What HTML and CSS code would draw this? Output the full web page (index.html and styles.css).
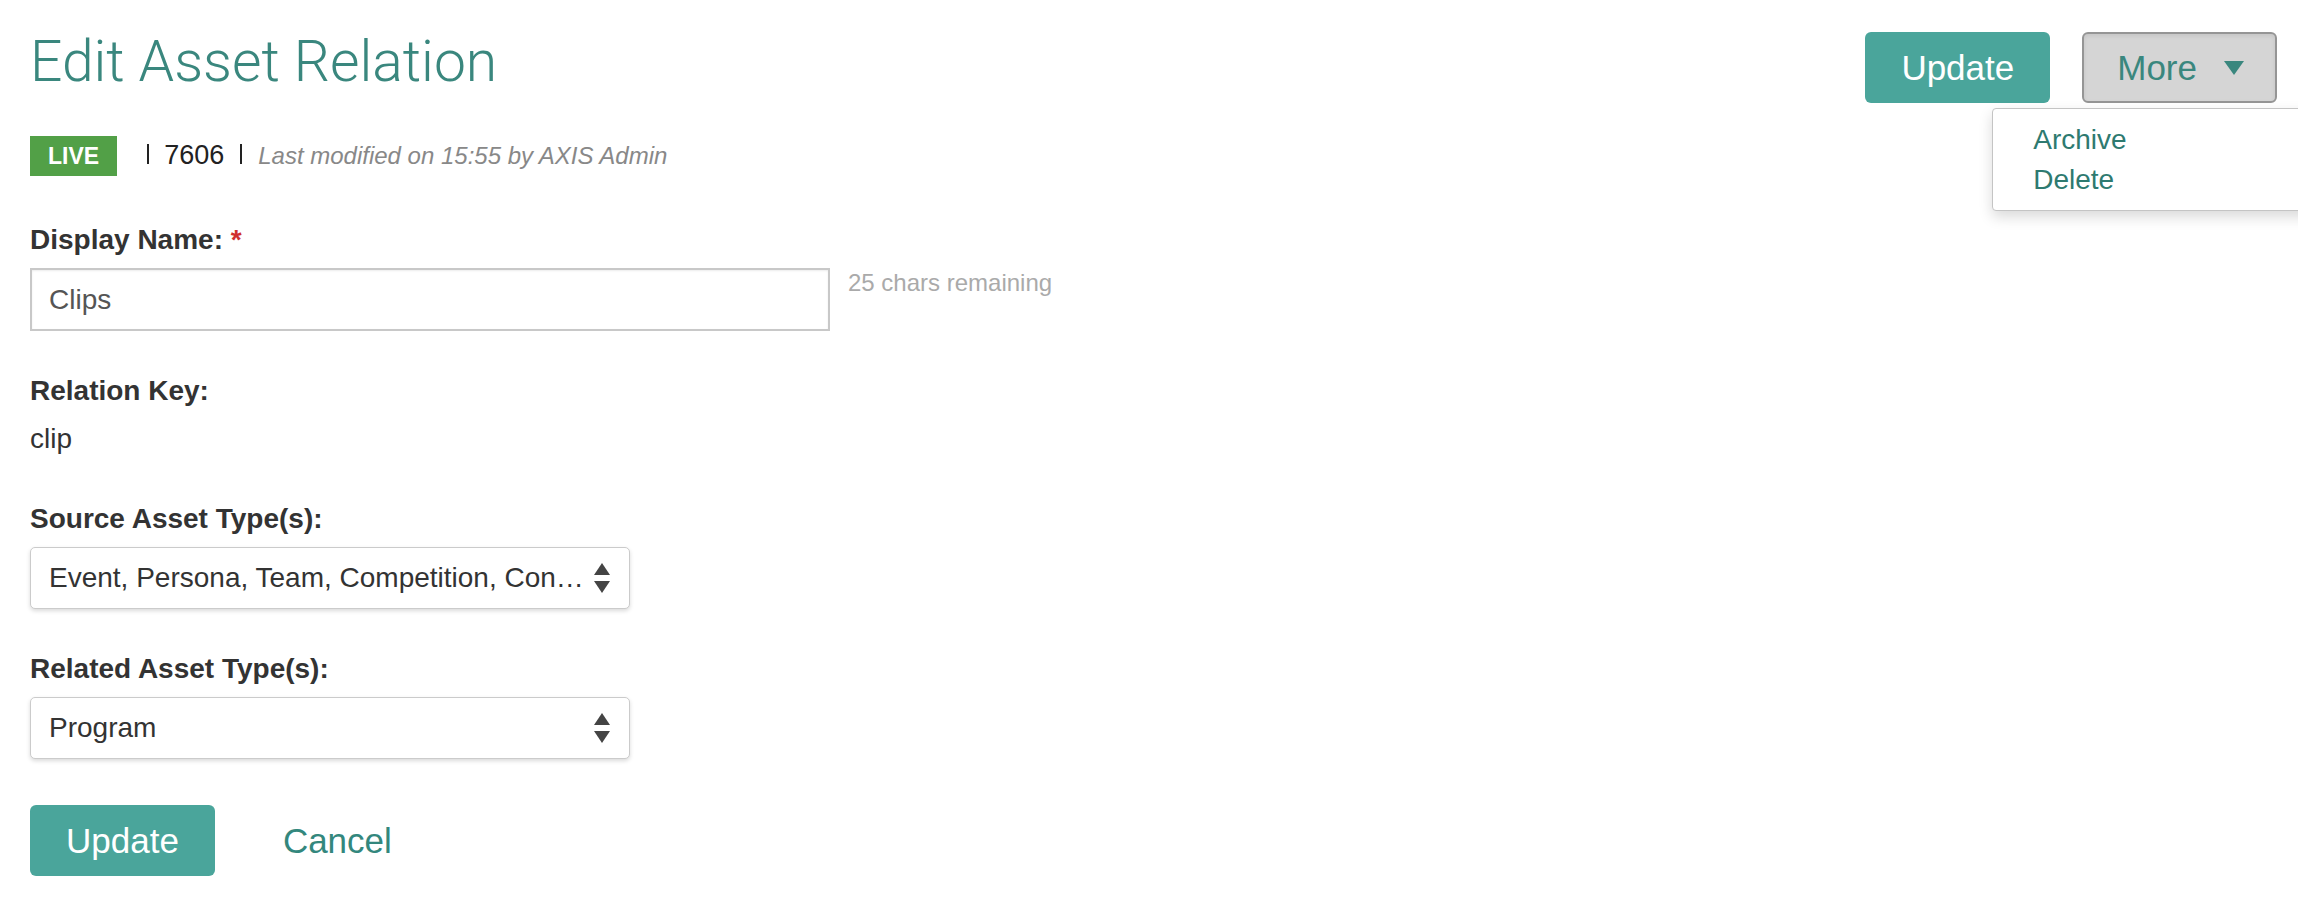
FILE: index.html
```
<!DOCTYPE html>
<html>
<head>
	<title>Edit Asset Relation</title>
	<link rel="stylesheet" href="styles.css">
</head>
<body>
	<div class="page">
		<header class="page-header">
			<div class="heading">
				<h1>Edit Asset Relation</h1>
				<div class="meta">
					<span class="badge">LIVE</span>
					<span class="bar"></span>
					<span class="asset-id">7606</span>
					<span class="bar"></span>
					<span class="modified">Last modified on 15:55 by AXIS Admin</span>
				</div>
			</div>
			<div class="actions">
				<button class="btn btn-primary">Update</button>
				<div class="more">
					<button class="btn btn-more">
						More
						<svg class="caret" width="20" height="14" viewBox="0 0 20 14"><path d="M0 0H20L10 14Z"/></svg>
					</button>
					<ul class="more-menu">
						<li><a href="#">Archive</a></li>
						<li><a href="#">Delete</a></li>
					</ul>
				</div>
			</div>
		</header>

		<form class="relation-form">
			<div class="field">
				<label for="display-name">Display Name: <span class="required">*</span></label>
				<div class="input-row">
					<input type="text" id="display-name" class="text-input" value="Clips">
					<span class="hint">25 chars remaining</span>
				</div>
			</div>

			<div class="field">
				<label>Relation Key:</label>
				<div class="static-value">clip</div>
			</div>

			<div class="field">
				<label>Source Asset Type(s):</label>
				<div class="select">
					<span class="select-value">Event, Persona, Team, Competition, Con…</span>
					<svg class="select-arrows" width="16" height="30" viewBox="0 0 16 30"><path d="M8 0L16 12H0Z"/><path d="M0 18H16L8 30Z"/></svg>
				</div>
			</div>

			<div class="field">
				<label>Related Asset Type(s):</label>
				<div class="select">
					<span class="select-value">Program</span>
					<svg class="select-arrows" width="16" height="30" viewBox="0 0 16 30"><path d="M8 0L16 12H0Z"/><path d="M0 18H16L8 30Z"/></svg>
				</div>
			</div>

			<div class="form-actions">
				<button type="button" class="btn btn-primary">Update</button>
				<a href="#" class="cancel">Cancel</a>
			</div>
		</form>
	</div>
</body>
</html>
```

FILE: styles.css
```
html, body {
	margin: 0;
	overflow: hidden;
}

body {
	font-family: 'Liberation Sans', Arial, sans-serif;
	color: #333;
	background-color: #fff;
}

.page {
	padding: 0 21px 0 30px;
}

.page-header {
	display: flex;
	justify-content: space-between;
	align-items: flex-start;
}

h1 {
	font-family: 'Roboto', 'Liberation Sans', sans-serif;
	font-weight: 300;
	font-size: 57px;
	line-height: 64px;
	color: #3a877e;
	margin: 30px 0 0 0;
}

.meta {
	display: flex;
	align-items: baseline;
	margin-top: 42px;
}

.badge {
	display: inline-block;
	background-color: #52a047;
	color: white;
	font-weight: bold;
	font-size: 23px;
	line-height: 40px;
	padding: 0 18px;
}

.bar {
	display: inline-block;
	width: 2px;
	height: 20px;
	background-color: #222;
	margin-left: 30px;
}

.asset-id + .bar {
	margin-left: 16px;
}

.asset-id {
	font-size: 27px;
	color: #222;
	margin-left: 15px;
}

.modified {
	font-size: 24px;
	font-style: italic;
	color: #888;
	margin-left: 16px;
}

.actions {
	display: flex;
	gap: 32px;
	margin-top: 32px;
}

.btn {
	font-family: 'Liberation Sans', Arial, sans-serif;
	font-size: 35px;
	height: 71px;
	border-radius: 6px;
	cursor: pointer;
	display: flex;
	align-items: center;
}

.btn-primary {
	background-color: #4aa59b;
	color: white;
	border: none;
	padding: 0 36px;
}

.btn-more {
	background-color: #d5d5d5;
	color: #3a877e;
	border: 2px solid #959595;
	box-shadow: inset 0 2px 4px rgba(0, 0, 0, 0.08);
	padding: 0 31px 0 33px;
}

.caret {
	fill: #3a877e;
	margin-left: 27px;
}

.more {
	position: relative;
}

.more-menu {
	position: absolute;
	top: 76px;
	left: -90px;
	width: 340px;
	margin: 0;
	padding: 11px 0 10px 0;
	list-style: none;
	background-color: white;
	border: 1px solid #c4c4c4;
	border-radius: 4px;
	box-shadow: 0 6px 14px rgba(0, 0, 0, 0.15);
}

.more-menu a {
	display: block;
	padding-left: 40px;
	font-size: 28px;
	line-height: 40px;
	color: #2e7a70;
	text-decoration: none;
}

.relation-form {
	margin-top: 44px;
}

.field {
	margin-bottom: 40px;
}

.field label {
	display: block;
	font-size: 28px;
	line-height: 40px;
	font-weight: bold;
	color: #333;
	margin-bottom: 8px;
}

.required {
	color: #d0312d;
}

.input-row {
	display: flex;
	align-items: flex-start;
}

.text-input {
	box-sizing: border-box;
	width: 800px;
	height: 63px;
	border: 2px solid #c8c8c8;
	box-shadow: inset 0 1px 2px rgba(0, 0, 0, 0.08);
	font-family: 'Liberation Sans', Arial, sans-serif;
	font-size: 28px;
	color: #555;
	padding: 0 17px;
	margin: 0;
	outline: none;
}

.hint {
	font-size: 24px;
	line-height: 30px;
	color: #aaa;
	margin-left: 18px;
}

.static-value {
	font-size: 28px;
	line-height: 40px;
}

.select {
	box-sizing: border-box;
	width: 600px;
	height: 62px;
	display: flex;
	align-items: center;
	justify-content: space-between;
	background-color: white;
	border: 1px solid #cbcbcb;
	border-radius: 5px;
	box-shadow: 0 2px 4px rgba(0, 0, 0, 0.15);
	padding: 0 19px 0 18px;
}

.select-value {
	font-size: 28px;
	color: #333;
	white-space: nowrap;
}

.select-arrows {
	fill: #444;
}

.form-actions {
	display: flex;
	align-items: center;
	margin-top: 46px;
}

.cancel {
	font-size: 35px;
	color: #33877d;
	text-decoration: none;
	margin-left: 68px;
}
```
